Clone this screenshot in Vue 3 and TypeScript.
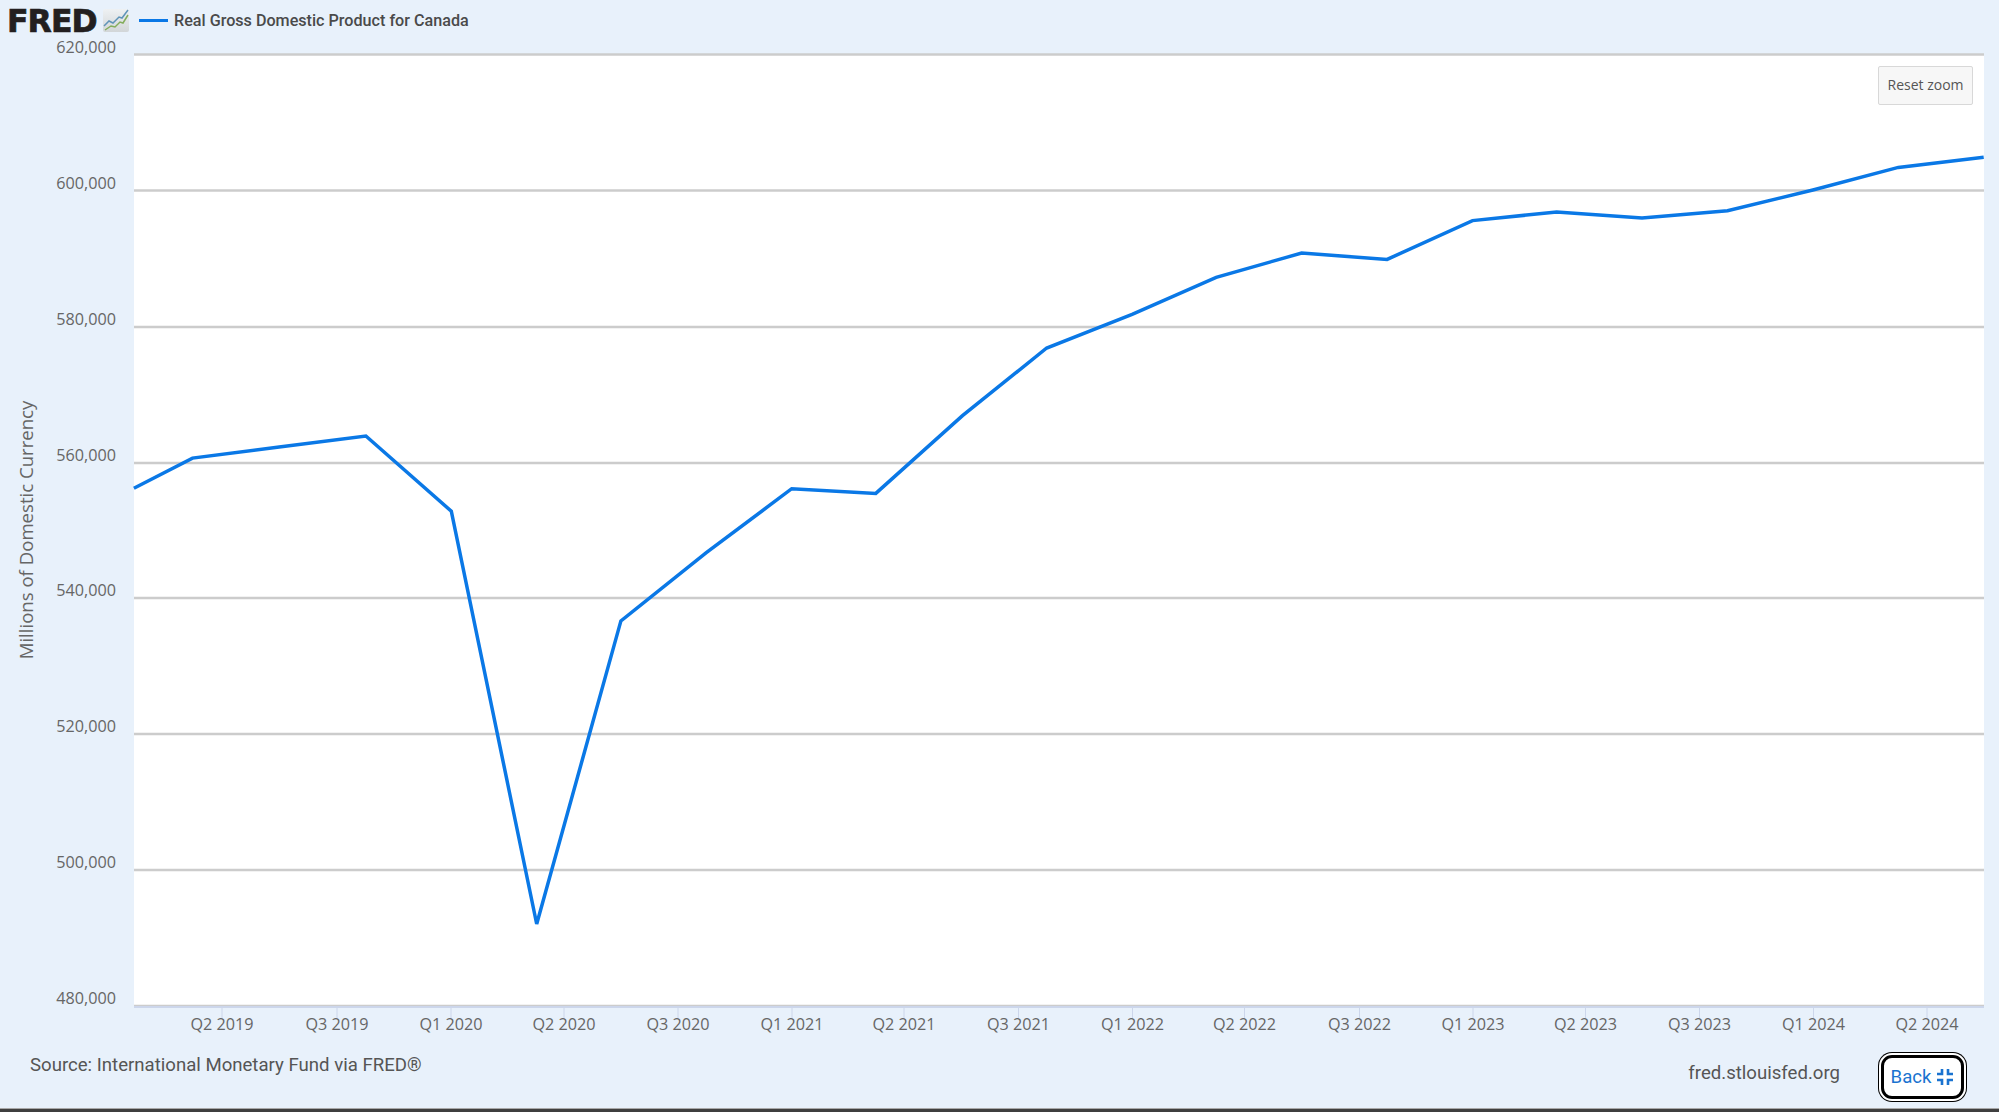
<script setup lang="ts">
const S = 1999 / 1568
const raw: [number, number][] = [
  [105, 383], [151, 359.3], [219, 350.6], [287, 342], [354, 401], [421, 724.8], [487, 487], [554, 433.5], [621, 383.3], [687, 387],
  [755, 326], [821, 273], [888, 246.5], [954, 217.5], [1021, 198.5], [1088, 203.5], [1155, 173], [1221, 166.3], [1288, 171],
  [1355, 165.3], [1422, 149], [1489, 131.3], [1556, 123.3]
]
const linePoints = raw.map(([x, y]) => `${(x * S).toFixed(1)},${(y * S).toFixed(1)}`).join(' ')
const yTicks = [
  { label: '620,000', y: 54.5 }, { label: '600,000', y: 190.5 }, { label: '580,000', y: 327 }, { label: '560,000', y: 463 },
  { label: '540,000', y: 598 }, { label: '520,000', y: 734 }, { label: '500,000', y: 870 }, { label: '480,000', y: 1006 }
]
const xTicks = [
  ['Q2 2019', 222], ['Q3 2019', 337], ['Q1 2020', 451], ['Q2 2020', 564], ['Q3 2020', 678], ['Q1 2021', 792], ['Q2 2021', 904], ['Q3 2021', 1018.5],
  ['Q1 2022', 1132.5], ['Q2 2022', 1244.5], ['Q3 2022', 1359.5], ['Q1 2023', 1473], ['Q2 2023', 1585.5], ['Q3 2023', 1699.5], ['Q1 2024', 1813.5], ['Q2 2024', 1927]
] as [string, number][]
</script>

<template>
  <div class="page">
    <header class="head">
      <div class="logo">
        <span class="fred">FRED</span>
        <svg class="logo-icon" width="26" height="24" viewBox="0 0 26 24">
          <defs>
            <linearGradient id="lg" x1="0" y1="0" x2="0" y2="1">
              <stop offset="0" stop-color="#eef1f3" />
              <stop offset="1" stop-color="#d2d6d8" />
            </linearGradient>
          </defs>
          <rect width="26" height="23" rx="2" fill="url(#lg)" />
          <polyline points="1,17 6,12 10,14 16,8 19,9 25,1" fill="none" stroke="#5f94b8" stroke-width="1.5" />
          <polyline points="2,21 8,17 12,18 17,13 20,14 25,6" fill="none" stroke="#84ad5c" stroke-width="1.5" />
        </svg>
      </div>
      <span class="swatch"></span>
      <span class="legend">Real Gross Domestic Product for Canada</span>
    </header>

    <div class="chart">
      <svg class="plot" width="1999" height="1002" viewBox="0 38 1999 1002">
        <rect x="134" y="54" width="1850" height="952" fill="#fff" />
        <line v-for="t in yTicks" :key="t.label" x1="134" x2="1984" :y1="t.y" :y2="t.y" stroke="#cccccc" stroke-width="2.4" />
        <line x1="134" x2="1984" y1="1007" y2="1007" stroke="#ccd6eb" stroke-width="2" />
        <line v-for="t in xTicks" :key="t[0]" :x1="t[1]" :x2="t[1]" y1="1007" y2="1019" stroke="#ccd6eb" stroke-width="1" />
        <text v-for="t in yTicks" :key="t.label + 'l'" class="tick" x="116" :y="t.y - 1.7" text-anchor="end">{{ t.label }}</text>
        <text v-for="t in xTicks" :key="t[0] + 'l'" class="tick" :x="t[1]" y="1030" text-anchor="middle">{{ t[0] }}</text>
        <text class="axis-title" transform="translate(33 530) rotate(-90)" text-anchor="middle">Millions of Domestic Currency</text>
        <polyline :points="linePoints" fill="none" stroke="#0a78e6" stroke-width="3.5" stroke-linejoin="miter" />
      </svg>
      <button class="reset">Reset zoom</button>
    </div>

    <footer class="foot">
      <span class="source">Source: International Monetary Fund via FRED®</span>
      <div class="foot-right">
        <span class="site">fred.stlouisfed.org</span>
        <button class="back">
          Back
          <svg width="18" height="18" viewBox="0 0 18 18" fill="none" stroke="#1a73d0" stroke-width="2.6">
            <path d="M6 1v5H1M12 1v5h5M6 17v-5H1M12 17v-5h5" />
          </svg>
        </button>
      </div>
    </footer>
    <div class="edge"></div>
  </div>
</template>

<style>
html, body { margin: 0; background: #e8f1fb; overflow: hidden; }
</style>

<style scoped>
.page {
  width: 1999px;
  height: 1112px;
  background: #e8f1fb;
  display: flex;
  flex-direction: column;
  overflow: hidden;
}
.head {
  height: 38px;
  display: flex;
  align-items: center;
  padding: 3px 0 0 7px;
  box-sizing: border-box;
}
.logo { display: flex; align-items: center; gap: 5px; width: 132px; }
.fred {
  font-family: "DejaVu Sans", sans-serif;
  font-weight: 700;
  font-size: 31.5px;
  line-height: 32px;
  color: #231f20;
  letter-spacing: -0.9px;
  width: 91px;
  -webkit-text-stroke: 0.7px #231f20;
}
.logo-icon { flex: none; }
.swatch { width: 29px; height: 3px; background: #0a78e6; margin-right: 6px; }
.legend {
  font-family: Roboto, sans-serif;
  font-weight: 500;
  font-size: 16.15px;
  color: #4a4a4a;
}
.chart { position: relative; height: 1002px; flex: none; }
.plot { display: block; overflow: visible; }
.tick { font-family: "Open Sans", sans-serif; font-size: 16.2px; fill: #666; }
.axis-title { font-family: "Open Sans", sans-serif; font-size: 18.6px; fill: #666; }
.reset {
  position: absolute;
  left: 1878px;
  top: 28px;
  width: 95px;
  height: 39px;
  padding: 0 0 2px;
  background: #f7f7f7;
  border: 1px solid #d8d8d8;
  border-radius: 2px;
  font-family: "Open Sans", sans-serif;
  font-size: 14px;
  color: #555;
}
.foot {
  height: 68px;
  flex: none;
  display: flex;
  justify-content: space-between;
  padding: 13px 35px 0 30px;
  box-sizing: border-box;
}
.source { font-family: Roboto, sans-serif; font-size: 18.6px; line-height: 24px; color: #555; }
.foot-right { display: flex; align-items: flex-start; gap: 41px; padding-top: 2px; }
.site { font-family: Roboto, sans-serif; font-size: 18.6px; line-height: 24px; margin-top: 6px; color: #555; }
.back {
  width: 83px;
  height: 44px;
  padding: 0;
  background: #fff;
  border: 3px solid #000;
  border-radius: 11px;
  box-shadow: 0 0 0 2px #fff, 0 0 0 3px #000;
  display: flex;
  align-items: center;
  justify-content: center;
  gap: 5px;
  font-family: Roboto, sans-serif;
  font-size: 18.6px;
  color: #1a73d0;
}
.edge { height: 4px; flex: none; background: #3f3f3f; border-top: 1px solid #a8a8a8; box-sizing: border-box; }
</style>
